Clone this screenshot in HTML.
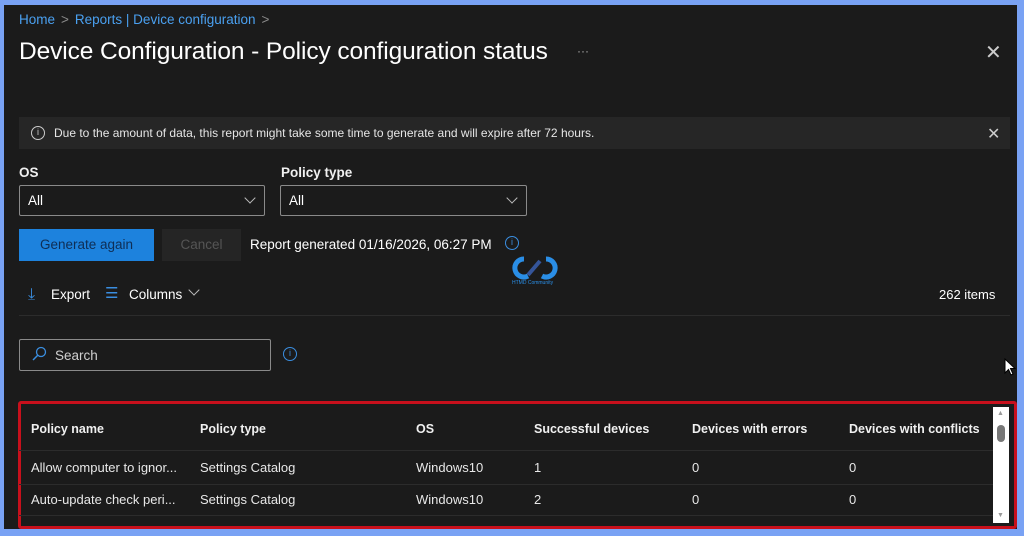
<!DOCTYPE html>
<html><head><meta charset="utf-8"><style>
*{box-sizing:border-box;margin:0;padding:0}
body{width:1024px;height:536px;background:#79a2f4;font-family:"Liberation Sans",sans-serif;position:relative;overflow:hidden;color:#fff}
.p{position:absolute;left:4px;top:5px;width:1013px;height:524px;background:#1b1b1b}
.a{position:absolute;white-space:nowrap}
.bc{left:19px;top:12px;font-size:13.5px;color:#4aa0f0}
.bc span{color:#8a8a8a;margin:0 6px}
h1{position:absolute;left:19px;top:38px;font-size:24.5px;font-weight:normal;color:#fff;letter-spacing:-.1px}
.info{left:19px;top:117px;width:991px;height:32px;background:#262626;font-size:12px;color:#e6e6e6;padding:9px 0 0 35px}
.ci{position:absolute;width:14px;height:14px;border:1.3px solid #ccc;border-radius:50%;font-size:9px;text-align:center;line-height:11px;color:#ccc}
.lbl{font-size:13.5px;font-weight:bold;color:#f0f0f0}
.dd{position:absolute;height:31px;border:1px solid #8a8a8a;border-radius:2px;font-size:13.5px;padding:7px 0 0 8px}
.chev{position:absolute;right:10px;top:8px;width:8px;height:8px;border-right:1.3px solid #bbb;border-bottom:1.3px solid #bbb;transform:rotate(45deg)}
.btn{position:absolute;height:32px;font-size:13.5px;text-align:center;line-height:32px}
.row{position:absolute;left:19px;width:974px;border-top:1px solid #2c2c2c}
.t{font-size:13px;color:#e8e8e8}
.th{font-size:12.5px;font-weight:bold;color:#f0f0f0}
</style></head><body>
<div class="p"></div>
<div class="a bc">Home<span>&gt;</span>Reports | Device configuration<span>&gt;</span></div>
<h1>Device Configuration - Policy configuration status</h1>
<div class="a" style="left:577px;top:44px;color:#aaa;font-size:12px">···</div>
<div class="a" style="left:985px;top:40px;color:#ccc;font-size:20px">✕</div>
<div class="a info">Due to the amount of data, this report might take some time to generate and will expire after 72 hours.</div>
<div class="ci" style="left:31px;top:126px">i</div>
<div class="a" style="left:987px;top:124px;color:#ccc;font-size:16px">✕</div>
<div class="a lbl" style="left:19px;top:165px">OS</div>
<div class="a lbl" style="left:281px;top:165px">Policy type</div>
<div class="dd" style="left:19px;top:185px;width:246px">All<div class="chev"></div></div>
<div class="dd" style="left:280px;top:185px;width:247px">All<div class="chev"></div></div>
<div class="btn" style="left:19px;top:229px;width:135px;background:#1d82dd;color:#0f2e55">Generate again</div>
<div class="btn" style="left:162px;top:229px;width:79px;background:#252525;color:#555">Cancel</div>
<div class="a" style="left:250px;top:237px;font-size:13.5px">Report generated 01/16/2026, 06:27 PM</div>
<div class="ci" style="left:505px;top:236px;border-color:#3a8ee0;color:#3a8ee0">i</div>
<svg class="a" style="left:510px;top:255px" width="55" height="30" viewBox="0 0 55 30"><path d="M14 4a9 9 0 1 0 4 17" stroke="#2a8ee6" stroke-width="5" fill="none"/><path d="M36 4a9 9 0 1 1-4 17" stroke="#2a8ee6" stroke-width="5" fill="none"/><path d="M18 20 30 6" stroke="#35559a" stroke-width="4"/><text x="2" y="29" font-size="5" fill="#2a8ee6" font-family="Liberation Sans">HTMD Community</text></svg>
<div class="a" style="left:28px;top:286px;color:#3a8ee0;font-size:16px">⤓</div>
<div class="a" style="left:51px;top:287px;font-size:13.5px">Export</div>
<div class="a" style="left:105px;top:284px;color:#3a8ee0;font-size:15px">☰</div>
<div class="a" style="left:129px;top:287px;font-size:13.5px">Columns</div>
<div class="a" style="left:190px;top:286px;width:8px;height:8px;border-right:1.3px solid #bbb;border-bottom:1.3px solid #bbb;transform:rotate(45deg)"></div>
<div class="a" style="left:939px;top:287px;font-size:13px">262 items</div>
<div class="a" style="left:19px;top:315px;width:991px;border-top:1px solid #2c2c2c"></div>
<div class="a" style="left:19px;top:339px;width:252px;height:32px;border:1px solid #8a8a8a;border-radius:2px"></div>
<svg class="a" style="left:31px;top:346px" width="16" height="16"><circle cx="10" cy="6" r="4.5" stroke="#3a8ee0" stroke-width="1.3" fill="none"/><path d="M7 9 2 14" stroke="#3a8ee0" stroke-width="1.5"/></svg>
<div class="a" style="left:55px;top:348px;font-size:13.5px;color:#cfcfcf">Search</div>
<div class="ci" style="left:283px;top:347px;border-color:#3a8ee0;color:#3a8ee0">i</div>
<svg class="a" style="left:1004px;top:358px" width="14" height="20"><path d="M1 1 1 15 4.5 11.5 7 17 9 16 6.5 10.5 11 10.5Z" fill="#fff" stroke="#000" stroke-width="1"/></svg>
<div class="a" style="left:18px;top:401px;width:999px;height:128px;border:3px solid #c8101c;border-radius:3px"></div>
<div class="a th" style="left:31px;top:422px">Policy name</div>
<div class="a th" style="left:200px;top:422px">Policy type</div>
<div class="a th" style="left:416px;top:422px">OS</div>
<div class="a th" style="left:534px;top:422px">Successful devices</div>
<div class="a th" style="left:692px;top:422px">Devices with errors</div>
<div class="a th" style="left:849px;top:422px">Devices with conflicts</div>
<div class="row" style="top:450px"></div><div class="row" style="top:484px"></div><div class="row" style="top:515px"></div>
<div class="a t" style="left:31px;top:460px">Allow computer to ignor...</div>
<div class="a t" style="left:200px;top:460px">Settings Catalog</div>
<div class="a t" style="left:416px;top:460px">Windows10</div>
<div class="a t" style="left:534px;top:460px">1</div><div class="a t" style="left:692px;top:460px">0</div><div class="a t" style="left:849px;top:460px">0</div>
<div class="a t" style="left:31px;top:492px">Auto-update check peri...</div>
<div class="a t" style="left:200px;top:492px">Settings Catalog</div>
<div class="a t" style="left:416px;top:492px">Windows10</div>
<div class="a t" style="left:534px;top:492px">2</div><div class="a t" style="left:692px;top:492px">0</div><div class="a t" style="left:849px;top:492px">0</div>
<div class="a" style="left:993px;top:407px;width:16px;height:116px;background:#fff"></div>
<div class="a" style="left:997px;top:425px;width:8px;height:17px;background:#777;border-radius:4px"></div>
<div class="a" style="left:997px;top:410px;color:#999;font-size:7px">▲</div>
<div class="a" style="left:997px;top:512px;color:#999;font-size:7px">▼</div>
</body></html>
